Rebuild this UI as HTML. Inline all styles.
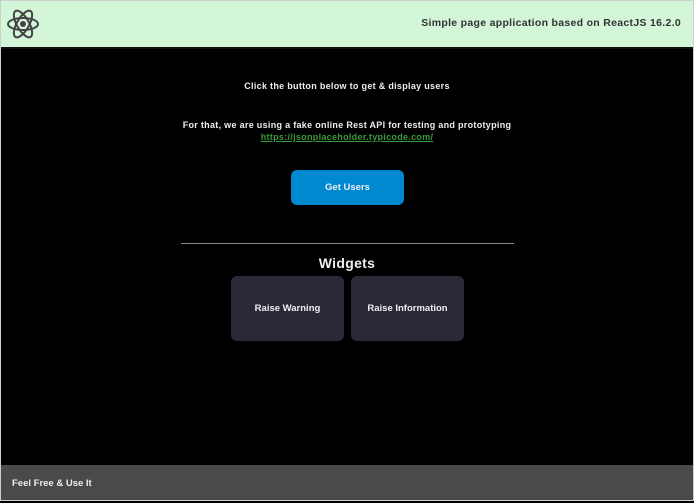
<!DOCTYPE html>
<html><head><style>
*{margin:0;padding:0;box-sizing:border-box}
body{width:694px;height:501px;background:#000;font-family:"Liberation Sans",sans-serif;font-weight:bold;position:relative;overflow:hidden;border:1px solid #cfcfcf}
.hdr{position:absolute;left:0;top:0;width:692px;height:48px;background:#d3f5d8;border-bottom:2px solid #111}
.hdr .t{position:absolute;right:12px;top:16px;font-size:10.5px;color:#333;letter-spacing:0.3px}
.c{position:absolute;left:0;width:692px;text-align:center;color:#eee;font-size:9px;letter-spacing:0.3px}
a{color:#3a9b3a;text-decoration:underline}
.btn{position:absolute;left:290px;top:169px;width:113px;height:35px;background:#0088d1;border-radius:6px;color:#eee;font-size:9.5px;text-align:center;line-height:35px}
.hr{position:absolute;left:180px;top:242px;width:333px;height:1px;background:#888}
.w{position:absolute;top:275px;width:113px;height:65px;background:#2d2838;border-radius:6px;color:#eee;font-size:9.5px;text-align:center;line-height:65px}
.ftr{position:absolute;left:0;top:464px;width:692px;height:35px;background:#4a4a4a;color:#eee;font-size:9.5px;line-height:38px;padding-left:11px}
</style></head><body>
<div class="hdr">
<svg style="position:absolute;left:5px;top:6px" width="34" height="34" viewBox="-17 -17 34 34" fill="none" stroke="#444" stroke-width="2">
<ellipse rx="15" ry="6"/><ellipse rx="15" ry="6" transform="rotate(60)"/><ellipse rx="15" ry="6" transform="rotate(120)"/><circle r="3" fill="#444" stroke="none"/></svg>
<div class="t">Simple page application based on ReactJS 16.2.0</div>
</div>
<div class="c" style="top:80px">Click the button below to get &amp; display users</div>
<div class="c" style="top:119px">For that, we are using a fake online Rest API for testing and prototyping</div>
<div class="c" style="top:131px"><a>https://jsonplaceholder.typicode.com/</a></div>
<div class="btn">Get Users</div>
<div class="hr"></div>
<div class="c" style="top:254px;font-size:14px">Widgets</div>
<div class="w" style="left:230px">Raise Warning</div>
<div class="w" style="left:350px">Raise Information</div>
<div class="ftr">Feel Free &amp; Use It</div>
</body></html>
